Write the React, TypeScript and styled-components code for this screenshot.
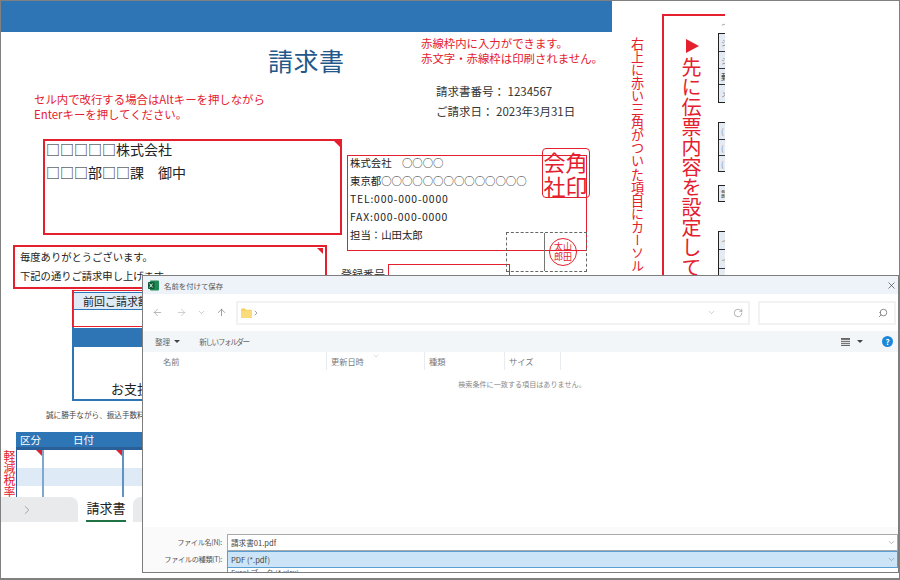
import React from "react";
import styled, { createGlobalStyle } from "styled-components";
import { ArrowLeft, ArrowRight, ArrowUp, ChevronDown, ChevronRight, RotateCw, Search, X } from "lucide-react";

const Global = createGlobalStyle`
  html, body { margin: 0; padding: 0; background: #fff; }
  body { font-family: "Noto Sans CJK JP", "Noto Sans", sans-serif; }
  * { box-sizing: border-box; }
`;

const RED = "#e5202e";
const BLUE = "#2e75b6";

const Frame = styled.div`
  position: relative;
  width: 900px;
  height: 580px;
  overflow: hidden;
  display: flex;
  background: #fff;
  border: 1px solid #808080;
  border-bottom-width: 2px;
`;
const Invoice = styled.div`
  width: 611px;
  flex: none;
  display: flex;
  flex-direction: column;
`;
const TopBar = styled.div`
  height: 31px;
  background: ${BLUE};
  flex: none;
`;
const Head = styled.div`
  height: 107px;
  flex: none;
  display: grid;
  grid-template-columns: 267px 153px 1fr;
`;
const RedNote = styled.p<{ $top: number; $left?: number }>`
  margin: 0;
  padding: ${(p) => p.$top}px 0 0 ${(p) => p.$left ?? 0}px;
  font-size: 11.4px;
  line-height: 14.6px;
  color: ${RED};
  white-space: nowrap;
`;
const Title = styled.h1`
  margin: 10px 0 0;
  font-size: 25px;
  line-height: 36px;
  font-weight: 400;
  letter-spacing: 0.5px;
  color: #24588a;
`;
const MetaList = styled.div`
  margin: 16px 0 0 15px;
  font-size: 11.5px;
  line-height: 20px;
  color: #333;
  white-space: nowrap;
`;
const Columns = styled.div`
  height: 383px;
  flex: none;
  display: flex;
`;
const LeftCol = styled.div`
  width: 345px;
  flex: none;
  display: flex;
  flex-direction: column;
  align-items: flex-start;
  & > * {
    flex: none;
  }
`;
const RightCol = styled.div`
  position: relative;
  flex: 1;
  padding-top: 16px;
`;
const RedBox = styled.div`
  position: relative;
  border: 2px solid ${RED};
  color: #222;
`;
const Corner = styled.span<{ $size?: number; $top?: number; $right?: number }>`
  position: absolute;
  top: ${(p) => p.$top ?? 0}px;
  right: ${(p) => p.$right ?? 0}px;
  border-style: solid;
  border-width: 0 ${(p) => p.$size ?? 6}px ${(p) => p.$size ?? 6}px 0;
  border-color: transparent ${RED} transparent transparent;
`;
const ClientBox = styled(RedBox)`
  margin-left: 42px;
  width: 299px;
  height: 96px;
  padding: 0 0 0 1px;
  font-size: 14px;
  line-height: 23px;
  white-space: nowrap;
`;
const ClientText = styled.div`
  margin-top: -3px;
`;
const MessageBox = styled(RedBox)`
  margin: 10px 0 0 12px;
  width: 314px;
  height: 44px;
  padding: 0 0 0 5px;
  font-size: 10.3px;
  line-height: 19px;
  white-space: nowrap;
`;
const Summary = styled.div`
  margin: 1px 0 0 71px;
  width: 240px;
  border: 2px solid ${BLUE};
  border-top: none;
  position: relative;
`;
const SummaryOutline = styled.span`
  position: absolute;
  left: -2px;
  top: 0;
  width: 100%;
  height: 37px;
  border: 1.5px solid ${RED};
`;
const SummaryHead = styled.div`
  margin-top: 2px;
  height: 18px;
  padding-left: 9px;
  font-size: 11px;
  line-height: 17px;
  color: #222;
  background: #deeaf6;
  border-bottom: 1px solid ${BLUE};
  border-top: 1px solid ${BLUE};
`;
const SummaryCell = styled.div`
  height: 18px;
`;
const SummaryBar = styled.div`
  height: 19px;
  background: ${BLUE};
`;
const SummaryTotal = styled.div`
  height: 52px;
  padding: 33px 0 0 37px;
  font-size: 13px;
  line-height: 18px;
  color: #222;
`;
const SmallNote = styled.p`
  margin: 8px 0 0 45px;
  font-size: 7.6px;
  line-height: 12px;
  color: #444;
  white-space: nowrap;
`;
const TableRow = styled.div`
  margin-top: 11px;
  display: flex;
  align-items: flex-start;
  height: 65px;
`;
const VLabel = styled.div`
  writing-mode: vertical-rl;
  margin: 18px 0 0 2px;
  width: 13px;
  height: 47px;
  font-size: 12px;
  line-height: 13px;
  color: ${RED};
  white-space: nowrap;
`;
const Ledger = styled.div`
  width: 280px;
  height: 65px;
  overflow: hidden;
`;
const LedgerHead = styled.div`
  height: 15px;
  background: ${BLUE};
  display: flex;
  color: #fff;
  font-size: 10.5px;
  line-height: 15px;
`;
const LedgerTitle = styled.span<{ $w: number }>`
  width: ${(p) => p.$w}px;
  padding-left: 4px;
`;
const LedgerBody = styled.div`
  display: grid;
  grid-template-columns: 27px 80px 1fr;
  grid-auto-rows: 18px;
  border-top: 3px solid #2a5f97;
  border-left: 1px solid #2a5f97;
`;
const LedgerCell = styled.div<{ $band?: boolean; $line?: string }>`
  position: relative;
  background: ${(p) => (p.$band ? "#deeaf5" : "#fff")};
  border-right: ${(p) => (p.$line ? `2px solid ${p.$line}` : "none")};
`;
const Tabs = styled.div`
  height: 25px;
  display: flex;
  align-items: stretch;
`;
const TabGhost = styled.div<{ $w: number; $radius: string }>`
  width: ${(p) => p.$w}px;
  background: #e8eaec;
  border-radius: ${(p) => p.$radius};
  display: flex;
  align-items: center;
  padding-left: 19px;
  color: #999;
`;
const TabActive = styled.div`
  margin: 0 7px 0 8px;
  width: 40px;
  font-size: 13px;
  line-height: 22px;
  color: #222;
  text-align: center;
  white-space: nowrap;
  border-bottom: 2px solid #217346;
  height: 25px;
`;
const SenderBox = styled.div`
  position: relative;
  margin-left: 1px;
  width: 240px;
  height: 96px;
  border: 1.5px solid ${RED};
  padding: 0 0 0 2px;
  font-size: 10.4px;
  line-height: 18px;
  color: #222;
  white-space: nowrap;
`;
const SenderText = styled.div`
  margin-top: -2px;
`;
const Latin = styled.span`
  letter-spacing: 0.8px;
`;
const CompanySeal = styled.div`
  position: absolute;
  left: 193.5px;
  top: -8px;
  width: 48px;
  height: 50px;
  border: 1px solid ${RED};
  border-radius: 4px;
  text-align: center;
  font-size: 22px;
  line-height: 24px;
  color: ${RED};
`;
const SealSlots = styled.div`
  position: absolute;
  left: 157.5px;
  top: 75.5px;
  width: 81px;
  height: 40px;
  display: flex;
  border: 1px dashed #666;
`;
const SealSlot = styled.div`
  flex: 1;
  display: flex;
  align-items: center;
  justify-content: center;
  & + & {
    border-left: 1px solid #777;
    padding-right: 4px;
  }
`;
const NameSeal = styled.div`
  width: 28px;
  height: 28px;
  border: 1px solid ${RED};
  border-radius: 50%;
  padding-top: 3px;
  text-align: center;
  font-size: 9px;
  line-height: 10px;
  color: ${RED};
`;
const RegRow = styled.div`
  margin-top: 13px;
  display: flex;
  align-items: flex-start;
`;
const RegLabel = styled.span`
  width: 47px;
  margin: 3px 0 0 -5px;
  font-size: 11px;
  line-height: 14px;
  color: #333;
  white-space: nowrap;
`;
const RegInput = styled.div`
  width: 122px;
  height: 40px;
  border: 1.5px solid ${RED};
`;
const Side = styled.div`
  flex: none;
  width: 114px;
  display: flex;
  align-items: flex-start;
`;
const SideNote = styled.div`
  writing-mode: vertical-rl;
  margin: 36px 0 0 18px;
  width: 14px;
  height: 240px;
  font-size: 13.1px;
  line-height: 14px;
  color: ${RED};
  white-space: nowrap;
`;
const SideBox = styled.div`
  margin: 13px 0 0 18px;
  width: 63px;
  height: 300px;
  border-top: 2px solid ${RED};
  border-left: 2px solid ${RED};
  overflow: hidden;
  display: flex;
`;
const SideHeading = styled.div`
  flex: none;
  width: 22px;
  margin: 23px 0 0 16px;
  display: flex;
  flex-direction: column;
  align-items: center;
`;
const SideHeadingText = styled.div`
  writing-mode: vertical-rl;
  font-size: 20px;
  line-height: 22px;
  color: ${RED};
  white-space: nowrap;
`;
const Arrow = styled.span`
  flex: none;
  width: 0;
  height: 0;
  margin: 0 0 4px 2px;
  border-style: solid;
  border-width: 7px 0 7px 13px;
  border-color: transparent transparent transparent ${RED};
`;
const SideCells = styled.div`
  flex: none;
  margin-left: 16px;
  display: flex;
  flex-direction: column;
  width: 8px;
  padding-top: 2px;
`;
const CellCaption = styled.div`
  height: 14px;
  font-size: 9px;
  line-height: 14px;
  color: #888;
  padding-left: 3px;
  overflow: hidden;
`;
const CellGroup = styled.div<{ $gap: number }>`
  margin-top: ${(p) => p.$gap}px;
  border: 1px solid #222;
  border-right: none;
  width: 12px;
`;
const SideCell = styled.div<{ $h: number; $dark?: boolean }>`
  height: ${(p) => p.$h}px;
  padding-left: 2px;
  font-size: 8px;
  line-height: ${(p) => p.$h}px;
  color: ${(p) => (p.$dark ? "#333" : "#889")};
  background: #e4ebf3;
  overflow: hidden;
  white-space: nowrap;
  & + & {
    border-top: 1px solid #333;
  }
`;

/* dialog: a window lying over the sheet */
const Dialog = styled.div`
  position: absolute;
  left: 141px;
  top: 274px;
  width: 757px;
  height: 298px;
  background: #fff;
  border: 1px solid #7d7d7d;
  display: flex;
  flex-direction: column;
  overflow: hidden;
  color: #666;
`;
const TitleBar = styled.div`
  height: 18px;
  flex: none;
  background: #eef3f9;
  display: flex;
  align-items: center;
  padding: 0 1px 0 5px;
  font-size: 7.4px;
  color: #555;
  gap: 5px;
`;
const TitleText = styled.span`
  flex: 1;
`;
const NavBar = styled.div`
  height: 37px;
  flex: none;
  display: flex;
  align-items: center;
  color: #999;
`;
const NavIcon = styled.span<{ $w: number }>`
  width: ${(p) => p.$w}px;
  display: flex;
  justify-content: center;
  flex: none;
`;
const AddressBox = styled.div`
  margin-left: 5px;
  width: 514px;
  height: 24px;
  border: 2px solid #f1f2f4;
  display: flex;
  align-items: center;
  padding: 0 5px 0 3px;
  color: #777;
`;
const AddressFill = styled.span`
  flex: 1;
`;
const AddressTail = styled.span`
  display: flex;
  width: 36px;
  justify-content: space-between;
  align-items: center;
  color: #aaa;
`;
const SearchBox = styled.div`
  margin-left: 8px;
  width: 138px;
  height: 24px;
  border: 2px solid #f1f2f4;
  display: flex;
  align-items: center;
  justify-content: flex-end;
  padding-right: 6px;
  color: #777;
`;
const SearchIcon = styled(Search)`
  transform: scaleX(-1);
`;
const Toolbar = styled.div`
  height: 21px;
  flex: none;
  background: #f3f6f9;
  display: flex;
  align-items: center;
  padding: 0 5px 0 12px;
  font-size: 7.6px;
  color: #666;
`;
const ToolItem = styled.span<{ $tight?: boolean }>`
  display: flex;
  align-items: center;
  gap: 4px;
  margin-right: 19px;
  white-space: nowrap;
  letter-spacing: ${(p) => (p.$tight ? "-1.4px" : "0")};
`;
const Caret = styled.span`
  display: inline-block;
  width: 0;
  height: 0;
  border-style: solid;
  border-width: 3px 3px 0;
  border-color: #444 transparent transparent;
`;
const ToolFill = styled.span`
  flex: 1;
`;
const ViewIcon = styled.span`
  width: 9px;
  height: 8px;
  margin-right: 7px;
  border-top: 1px solid #666;
  border-bottom: 1px solid #666;
  background: repeating-linear-gradient(#777 0 1px, #ddd 1px 2px);
`;
const HelpDot = styled.span`
  margin-left: 19px;
  width: 11px;
  height: 11px;
  border-radius: 50%;
  background: #1c87d8;
  color: #fff;
  font-size: 8px;
  line-height: 11px;
  font-weight: 700;
  text-align: center;
`;
const Columns2 = styled.div`
  height: 18px;
  flex: none;
  display: flex;
  font-size: 8.2px;
  line-height: 18px;
  color: #777;
`;
const ColHead = styled.div<{ $w: number; $pad?: number }>`
  position: relative;
  width: ${(p) => p.$w}px;
  flex: none;
  padding-left: ${(p) => p.$pad ?? 4}px;
  border-right: 1px solid #e9ecef;
  white-space: nowrap;
`;
const SortMark = styled.span`
  position: absolute;
  top: -5px;
  right: 44px;
  color: #bbb;
`;
const EmptyMessage = styled.div`
  height: 157px;
  flex: none;
  padding: 7px 0 0 3px;
  text-align: center;
  font-size: 7.1px;
  line-height: 14px;
  color: #888;
`;
const Footer = styled.div`
  flex: 1;
  background: #fafafa;
  padding-top: 7px;
  font-size: 7.6px;
  color: #555;
`;
const FieldRow = styled.div`
  display: flex;
  height: 17px;
  align-items: stretch;
`;
const FieldLabel = styled.label`
  width: 79px;
  flex: none;
  text-align: right;
  line-height: 16px;
  font-size: 7.2px;
  letter-spacing: -0.35px;
  white-space: nowrap;
`;
const FieldValue = styled.div<{ $selected?: boolean }>`
  margin-left: 5px;
  flex: 1;
  display: flex;
  align-items: center;
  justify-content: space-between;
  padding: 0 1px 0 3px;
  background: ${(p) => (p.$selected ? "#cce4f7" : "#fff")};
  border: 1px solid ${(p) => (p.$selected ? "#5a9fd4" : "#a9a9a9")};
  color: #444;
  white-space: nowrap;
`;
const Dropdown = styled.div`
  margin-left: 84px;
  height: 6px;
  background: #fff;
  border-left: 1px solid #5a9fd4;
  padding-left: 3px;
  font-size: 7.6px;
  line-height: 10px;
  overflow: hidden;
  white-space: nowrap;
`;

const ExcelMark = () => (
  <svg width="11" height="11" viewBox="0 0 11 11">
    <rect x="2" y="0.5" width="9" height="10" rx="1" fill="#1f8a55" />
    <rect x="0" y="2" width="6.5" height="7" rx="0.8" fill="#0e5c36" />
    <path d="M1.6 3.6l3 3.8M4.6 3.6l-3 3.8" stroke="#fff" strokeWidth="0.9" />
  </svg>
);
const FolderMark = () => (
  <svg width="11" height="10" viewBox="0 0 11 10">
    <path d="M0 1.5A1 1 0 0 1 1 .5h3l1 1.2h5a1 1 0 0 1 1 1V9a1 1 0 0 1-1 1H1a1 1 0 0 1-1-1z" fill="#f7cf58" />
    <rect x="0" y="2.6" width="11" height="7.4" rx="0.8" fill="#fbdc7c" />
  </svg>
);

export default function App() {
  return (
    <>
      <Global />
      <Frame>
        <Invoice>
          <TopBar />
          <Head>
            <RedNote $top={60} $left={33}>
              セル内で改行する場合はAltキーを押しながら
              <br />
              Enterキーを押してください。
            </RedNote>
            <Title>請求書</Title>
            <div>
              <RedNote $top={4}>
                赤線枠内に入力ができます。
                <br />
                赤文字・赤線枠は印刷されません。
              </RedNote>
              <MetaList>
                請求書番号： 1234567
                <br />
                ご請求日： 2023年3月31日
              </MetaList>
            </div>
          </Head>
          <Columns>
            <LeftCol>
              <ClientBox>
                <Corner />
                <ClientText>
                  □□□□□株式会社
                  <br />
                  □□□部□□課　御中
                </ClientText>
              </ClientBox>
              <MessageBox>
                <Corner $top={1} $right={2} />
                毎度ありがとうございます。
                <br />
                下記の通りご請求申し上げます。
              </MessageBox>
              <Summary>
                <SummaryOutline />
                <SummaryHead>前回ご請求額</SummaryHead>
                <SummaryCell />
                <SummaryBar />
                <SummaryTotal>お支払</SummaryTotal>
              </Summary>
              <SmallNote>誠に勝手ながら、振込手数料</SmallNote>
              <TableRow>
                <VLabel>軽減税率</VLabel>
                <Ledger>
                  <LedgerHead>
                    <LedgerTitle $w={53}>区分</LedgerTitle>
                    <LedgerTitle $w={80}>日付</LedgerTitle>
                  </LedgerHead>
                  <LedgerBody>
                    <LedgerCell $line="#7fa8d0">
                      <Corner />
                    </LedgerCell>
                    <LedgerCell $line="#5f93c4">
                      <Corner />
                    </LedgerCell>
                    <LedgerCell />
                    <LedgerCell $band $line="#7fa8d0" />
                    <LedgerCell $band $line="#5f93c4" />
                    <LedgerCell $band />
                    <LedgerCell $line="#7fa8d0" />
                    <LedgerCell $line="#5f93c4" />
                    <LedgerCell />
                  </LedgerBody>
                </Ledger>
              </TableRow>
              <Tabs>
                <TabGhost $w={77} $radius="0 8px 0 0">
                  <ChevronRight size={14} strokeWidth={1.5} />
                </TabGhost>
                <TabActive>請求書</TabActive>
                <TabGhost $w={60} $radius="8px 0 0 0" />
              </Tabs>
            </LeftCol>
            <RightCol>
              <SenderBox>
                <SenderText>
                  株式会社　○○○○
                  <br />
                  東京都○○○○○○○○○○○○○○
                  <br />
                  <Latin>TEL:000-000-0000</Latin>
                  <br />
                  <Latin>FAX:000-000-0000</Latin>
                  <br />
                  担当：山田太郎
                </SenderText>
                <CompanySeal>
                  会角
                  <br />
                  社印
                </CompanySeal>
                <SealSlots>
                  <SealSlot />
                  <SealSlot>
                    <NameSeal>
                      太山
                      <br />
                      郎田
                    </NameSeal>
                  </SealSlot>
                </SealSlots>
              </SenderBox>
              <RegRow>
                <RegLabel>登録番号</RegLabel>
                <RegInput />
              </RegRow>
            </RightCol>
          </Columns>
        </Invoice>
        <Side>
          <SideNote>右上に赤い三角がついた項目にカーソル</SideNote>
          <SideBox>
            <SideHeading>
              <Arrow />
              <SideHeadingText>先に伝票内容を設定して</SideHeadingText>
            </SideHeading>
            <SideCells>
              <CellCaption>イ</CellCaption>
              <CellGroup $gap={1}>
                <SideCell $h={17}>シ</SideCell>
                <SideCell $h={17}>シ</SideCell>
                <SideCell $h={16} $dark>
                  郵
                </SideCell>
                <SideCell $h={18}>メ</SideCell>
              </CellGroup>
              <CellGroup $gap={19}>
                <SideCell $h={16}>(</SideCell>
                <SideCell $h={16}>(</SideCell>
                <SideCell $h={16}>(</SideCell>
              </CellGroup>
              <CellGroup $gap={13}>
                <SideCell $h={15} $dark>
                  請
                </SideCell>
              </CellGroup>
              <CellGroup $gap={29}>
                <SideCell $h={17}>イ</SideCell>
                <SideCell $h={19}>イ</SideCell>
                <SideCell $h={19}>イ</SideCell>
              </CellGroup>
            </SideCells>
          </SideBox>
        </Side>
        <Dialog>
          <TitleBar>
            <ExcelMark />
            <TitleText>名前を付けて保存</TitleText>
            <X size={11} strokeWidth={1.5} color="#444" />
          </TitleBar>
          <NavBar>
            <NavIcon $w={28}>
              <ArrowLeft size={11} strokeWidth={1.5} />
            </NavIcon>
            <NavIcon $w={20}>
              <ArrowRight size={11} strokeWidth={1.5} color="#bbb" />
            </NavIcon>
            <NavIcon $w={20}>
              <ChevronDown size={9} strokeWidth={1.5} />
            </NavIcon>
            <NavIcon $w={20}>
              <ArrowUp size={11} strokeWidth={1.5} color="#777" />
            </NavIcon>
            <AddressBox>
              <FolderMark />
              <ChevronRight size={8} strokeWidth={2} />
              <AddressFill />
              <AddressTail>
                <ChevronDown size={9} strokeWidth={1.5} />
                <RotateCw size={10} strokeWidth={1.5} color="#888" />
              </AddressTail>
            </AddressBox>
            <SearchBox>
              <SearchIcon size={10} strokeWidth={2} />
            </SearchBox>
          </NavBar>
          <Toolbar>
            <ToolItem>
              整理 <Caret />
            </ToolItem>
            <ToolItem $tight>新しいフォルダー</ToolItem>
            <ToolFill />
            <ViewIcon />
            <Caret />
            <HelpDot>?</HelpDot>
          </Toolbar>
          <Columns2>
            <ColHead $w={184} $pad={20}>
              名前
            </ColHead>
            <ColHead $w={98}>
              更新日時
              <SortMark>
                <ChevronDown size={8} strokeWidth={1.5} />
              </SortMark>
            </ColHead>
            <ColHead $w={80}>種類</ColHead>
            <ColHead $w={56}>サイズ</ColHead>
          </Columns2>
          <EmptyMessage>検索条件に一致する項目はありません。</EmptyMessage>
          <Footer>
            <FieldRow>
              <FieldLabel>ファイル名(N):</FieldLabel>
              <FieldValue>
                請求書01.pdf
                <ChevronDown size={9} strokeWidth={1.5} color="#888" />
              </FieldValue>
            </FieldRow>
            <FieldRow>
              <FieldLabel>ファイルの種類(T):</FieldLabel>
              <FieldValue $selected>
                PDF (*.pdf)
                <ChevronDown size={9} strokeWidth={1.5} color="#888" />
              </FieldValue>
            </FieldRow>
            <Dropdown>Excel ブック (*.xlsx)</Dropdown>
          </Footer>
        </Dialog>
      </Frame>
    </>
  );
}
